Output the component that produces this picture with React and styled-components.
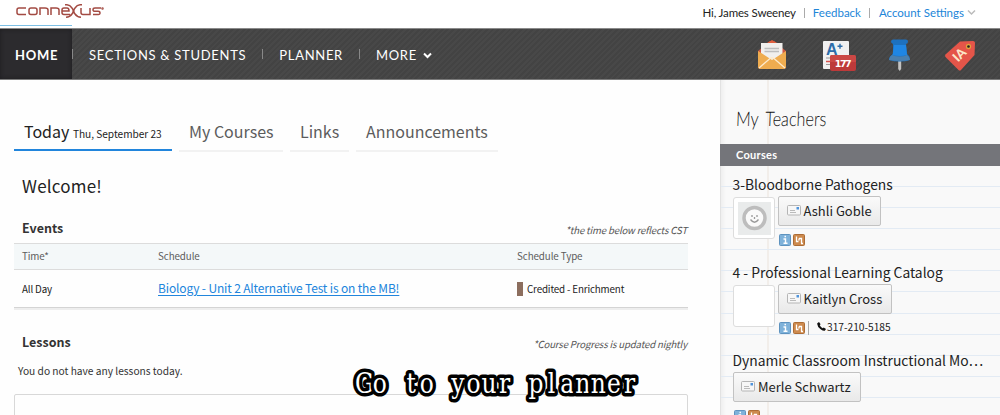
import React from "react";
import styled, { createGlobalStyle } from "styled-components";

const Global = createGlobalStyle`
  * { box-sizing: border-box; }
  html, body { margin: 0; padding: 0; overflow: hidden; }
`;

const source = `"Noto Sans CJK SC", "Open Sans", sans-serif`;
const lato = `Lato, sans-serif`;

const Page = styled.div`
  position: relative;
  width: 1000px;
  height: 415px;
  overflow: hidden;
  display: flex;
  flex-direction: column;
  background: #fefefe;
  color: #222;
  font-family: ${source};
`;

const TopBar = styled.header`
  height: 28px;
  flex: none;
  display: flex;
  justify-content: space-between;
  background: #fff;
`;

const LogoArea = styled.div`
  width: 72px;
  height: 26px;
  border-bottom: 1px solid #7dbfe4;
  padding: 4px 0 0 16px;
  svg { display: block; overflow: visible; }
`;

const UserLinks = styled.div`
  display: flex;
  align-items: center;
  height: 25px;
  padding-right: 24px;
  font: 11.5px/25px ${lato};
  color: #222;
`;

const UserItem = styled.span`
  color: ${(p) => (p.$link ? "#2185d8" : "#222")};
  letter-spacing: ${(p) => p.$spacing || "0"};
  white-space: nowrap;
`;

const Rule = styled.i`
  width: 1px;
  height: ${(p) => p.$height || "10px"};
  margin: ${(p) => p.$margin || "0 8px"};
  background: ${(p) => p.$color || "#aaa"};
`;

const Nav = styled.nav`
  height: 52px;
  flex: none;
  display: flex;
  align-items: center;
  border-top: 1px solid #8a8a8a;
  border-bottom: 1px solid #7b7b7b;
  background: repeating-linear-gradient(135deg, #434343 0 2px, #484848 2px 4px);
  color: #fff;
  font: 13px/50px ${lato};
`;

const NavItem = styled.a`
  height: 50px;
  display: flex;
  align-items: center;
  padding-top: 1px;
  letter-spacing: 0.7px;
  white-space: nowrap;
  ${(p) => p.$active && `
    width: 72px;
    padding-left: 15px;
    font-weight: 700;
    background: #2c2b2e;
    box-shadow: inset 0 0 4px #1d1c1f;
  `}
  svg { margin: 1px 0 0 6px; }
`;

const NavIcons = styled.div`
  margin-left: auto;
  display: flex;
  width: 243px;
  height: 50px;
  svg { display: block; }
`;

const Body = styled.div`
  flex: 1;
  display: flex;
  min-height: 0;
`;

const Main = styled.main`
  width: 720px;
  padding: 36px 32px 0 14px;
  background: #fefefe;
`;

const Tabs = styled.div`
  display: flex;
  gap: 7px;
  height: 36px;
`;

const Tab = styled.div`
  width: ${(p) => p.$width}px;
  height: ${(p) => (p.$active ? 35 : 36)}px;
  padding-left: 10px;
  border-bottom: 2px solid ${(p) => (p.$active ? "#2185dc" : "#f2f2f2")};
  color: ${(p) => (p.$active ? "#222" : "#5c5c5c")};
  font-size: 16px;
  line-height: 31px;
  white-space: nowrap;
  small { font-size: 10.1px; margin-left: 3.5px; }
`;

const Welcome = styled.h1`
  margin: 21px 0 0 8px;
  font-size: 17px;
  letter-spacing: 0.2px;
  line-height: 26px;
  font-weight: 400;
`;

const SectionHead = styled.div`
  display: flex;
  justify-content: space-between;
  height: ${(p) => p.$height}px;
  margin-top: ${(p) => p.$top}px;
  padding-left: 8px;
`;

const SectionTitle = styled.h2`
  margin: 0;
  font-size: 12.5px;
  line-height: 20px;
  font-weight: 700;
  color: #333;
`;

const Note = styled.em`
  font-size: 9.6px;
  letter-spacing: -0.15px;
  line-height: 24px;
  margin-right: 1px;
  color: #555;
  white-space: nowrap;
`;

const Row = styled.div`
  display: grid;
  grid-template-columns: 136px 359px 1fr;
  align-items: center;
  padding: 0 0 ${(p) => (p.$head ? 2 : 1)}px 8px;
  height: ${(p) => (p.$head ? 27 : 40)}px;
  font-size: 9.8px;
  letter-spacing: ${(p) => (p.$head ? "-0.1px" : "-0.15px")};
  color: ${(p) => (p.$head ? "#5c5c5c" : "#222")};
  ${(p) => p.$head
    ? "background:#f4f8f9; border-top:1px solid #dcdcdc; border-bottom:1px solid #dcdcdc;"
    : "border-bottom:2px solid #eee; box-shadow: inset 0 -1px #d4d4d4;"}
`;

const EventLink = styled.a`
  position: relative;
  top: -1px;
  font-size: 12px;
  letter-spacing: -0.15px;
  color: #2185dc;
  text-decoration: underline;
  text-underline-offset: 2px;
`;

const Kind = styled.span`
  display: flex;
  align-items: center;
  gap: 4px;
  &::before {
    content: "";
    width: 6px;
    height: 14px;
    background: #8c6e5e;
  }
`;

const Empty = styled.p`
  margin: 5px 0 0 4px;
  font-size: 10.2px;
  line-height: 20px;
  color: #333;
`;

const Panel = styled.div`
  height: 60px;
  margin-top: 13px;
  border: 1px solid #d8d8d8;
  border-radius: 2px;
`;

const Side = styled.aside`
  flex: 1;
  min-width: 0;
  border-left: 1px solid #e2e2e2;
  background: linear-gradient(90deg, #efefef, #f9f9f9 5px);
`;

const SideHead = styled.div`
  height: 64px;
  padding: 25px 0 0 15px;
  background: linear-gradient(#f2eeea, #f2eeea) 46px 0 / 2px 100% no-repeat;
`;

const Hand = styled.h2`
  margin: 0;
  width: max-content;
  font: 300 20px/26px ${lato};
  word-spacing: 4px;
  transform: scaleX(0.81) skewX(-3deg);
  transform-origin: 0 50%;
  color: #111;
`;

const SideBar = styled.div`
  height: 22px;
  margin-left: -1px;
  padding-left: 16px;
  background: #74757a;
  color: #fff;
  font: 700 11px/22px ${lato};
  letter-spacing: 0.3px;
`;

const Paper = styled.div`
  height: 250px;
  padding: 7px 0 0 11.5px;
  background:
    repeating-linear-gradient(transparent 0 20px, #e3ebf4 20px 21px, transparent 21px 21.1px),
    linear-gradient(#f2eeea, #f2eeea) 46px 0 / 2px 100% no-repeat;
`;

const Course = styled.section`
  height: 88px;
`;

const CourseName = styled.h3`
  margin: 0;
  font-size: 13.85px;
  line-height: 23px;
  font-weight: 400;
  white-space: nowrap;
`;

const Teacher = styled.div`
  display: flex;
  gap: 3px;
`;

const Avatar = styled.div`
  width: 42.5px;
  height: 42px;
  margin-top: 1px;
  padding: 4px;
  border: 1px solid #ddd;
  border-radius: 3px;
  background: #fff;
  svg { display: block; }
`;

const MailButton = styled.button`
  display: flex;
  align-items: center;
  gap: 3px;
  width: ${(p) => p.$width}px;
  height: 30px;
  padding: 0 0 1px 7.5px;
  border: 1px solid #c2c2c2;
  border-radius: 2px;
  background: linear-gradient(#fafafa, #e9e9e9);
  color: #222;
  font: 13px/27px ${source};
  white-space: nowrap;
`;

const Tools = styled.div`
  display: flex;
  align-items: center;
  gap: 2px;
  height: 13px;
  margin-top: 7px;
  padding-left: 1px;
  font-size: 10.2px;
  line-height: 13px;
`;

const PhoneNumber = styled.span`
  display: flex;
  align-items: center;
  gap: 1px;
  height: 13px;
  padding-bottom: 2px;
`;

const Caption = styled.svg`
  position: absolute;
  left: 345px;
  top: 360px;
`;

const Logo = () => (
  <svg width="90" height="16" viewBox="0 0 90 16" fill="none" stroke="#a34b43" strokeWidth="1.5">
    <path d="M10 4H3Q1 4 1 6V8.500Q1 10.500 3 10.500H10M13 6Q13 4 15 4H19Q21 4 21 6V8.500Q21 10.500 19 10.500H15Q13 10.500 13 8.500ZM24 11V4H29Q32 4 32 6V11M35 11V4H40Q43 4 43 6V11M54 10.500H48Q46 10.500 46 8.500V6Q46 4 48 4H51Q53 4 53 7H46M65 4V8.500Q65 10.500 67 10.500H74V4M85 4H79Q77 4 77 5.700T79 7.300H82Q84 7.300 84 9T82 10.500H77" />
    <path d="M49 .8H51Q54 1 56 4Q58.500 7 56 10Q54 13 50 13.300M66 .8H64Q61 1 59 4Q56.500 7 59 10Q61 13 65 13.300" />
    <circle cx="86.500" cy="4.500" r=".5" />
  </svg>
);

const Chevron = ({ color, w = 1.5 }) => (
  <svg width="9" height="7" viewBox="0 0 9 7" fill="none" stroke={color} strokeWidth={w}>
    <path d="M1 1.500L4.500 5L8 1.500" />
  </svg>
);

const MailGlyph = () => (
  <svg width="14" height="11" viewBox="0 0 14 11">
    <rect x=".5" y=".5" width="13" height="9.500" rx="1" fill="#f7f7f7" stroke="#b5b5b5" />
    <path d="M3 5.500h5M3 7.500h6" stroke="#bbb" />
    <rect x="9.500" y="2" width="2.500" height="2.500" fill="#4f94dc" />
  </svg>
);

const InfoGlyph = () => (
  <svg width="12" height="12" viewBox="0 0 12 12">
    <rect x=".5" y=".5" width="11" height="11" rx="1" fill="#7fb2da" stroke="#5e93bf" />
    <path d="M4.500 5h2v4M4.500 9.200h4M5.500 2.500h1.500" stroke="#fff" strokeWidth="1.400" fill="none" />
  </svg>
);

const LinkGlyph = () => (
  <svg width="12" height="12" viewBox="0 0 12 12">
    <rect x=".5" y=".5" width="11" height="11" rx="1" fill="#cd8a4e" stroke="#ad6c35" />
    <path d="M3.500 2.500v5h2M6 4.500h2.500v5M6 4.500v2M8 9.500h2" stroke="#fff" strokeWidth="1.300" fill="none" />
  </svg>
);

const Smiley = () => (
  <svg width="33" height="33" viewBox="0 0 33 33">
    <rect width="33" height="33" fill="#e9ebeb" />
    <circle cx="16.500" cy="16" r="10.500" fill="#fafafa" stroke="#bdbdbd" strokeWidth="3.500" />
    <path d="M12.500 17.500Q16.500 23 20.500 17.500" fill="none" stroke="#999" strokeWidth="1.300" />
    <path d="M14 13v2M19 13v2M16.500 15v2" stroke="#999" strokeWidth="1.300" />
  </svg>
);

const Phone = () => (
  <svg width="9" height="9" viewBox="0 0 9 9">
    <path d="M.3 1.200L2 0L3.600 2.300L2.700 3.200Q3.800 5.200 5.700 6.200L6.700 5.400L9 7L7.800 8.700Q6.500 9.300 3.600 7.200Q-.3 4 .3 1.200Z" fill="#111" />
  </svg>
);

const ToolbarIcons = () => (
  <svg width="243" height="50" viewBox="757 29 243 50">
    <path d="M758 51L772 40L786 51V66Q786 69 783 69H761Q758 69 758 66Z" fill="#cf5a41" />
    <path d="M767 43Q772 38 777 43Z" fill="#e0603f" />
    <rect x="761" y="43" width="21.500" height="20" fill="#f1efed" />
    <path d="M764.500 48.500h14.500M764.500 51.500h14.500" stroke="#bdbdbd" strokeWidth="1.300" />
    <path d="M758 51L772 60L786 51V66.500Q786 69 783.500 69H760.500Q758 69 758 66.500Z" fill="#efac4f" />
    <path d="M759 68L770 58.500Q772 57 774 58.500L785 68" fill="none" stroke="#fdeacb" strokeWidth="1.300" />
    <rect x="823" y="41" width="26" height="28" rx="1" fill="#f1f1f1" />
    <text x="826" y="54.500" fontFamily="Liberation Sans" fontWeight="700" fontSize="16" fill="#2d6da9">A</text>
    <path d="M837.500 46.300h5M840 43.800v5" stroke="#2d6da9" strokeWidth="1.400" />
    <path d="M826 58h5M826 64.500h5" stroke="#999" /><path d="M826 61.500h5" stroke="#d9534f" strokeWidth="1.500" />
    <rect x="830" y="55" width="26" height="16" rx="2" fill="#bd3a3a" />
    <path d="M830 62V57Q830 55 832 55H854Q856 55 856 57V62Z" fill="#cb4845" />
    <text x="843.200" y="67" textAnchor="middle" fontFamily="DejaVu Sans" fontWeight="700" fontSize="9.500" textLength="17" fill="#fff">177</text>
    <path d="M898.200 60h3v9l-1.500 2l-1.500-2z" fill="#c2c2c2" />
    <path d="M893 39.500H906Q908 39.500 908 41.500T906 44L907 54Q910 56 910 60Q900 63 889 60Q889 56 893 54V44Q891 43 891 41.500T893 39.500Z" fill="#1d71bf" />
    <path d="M894 45H906L907 55Q900 57 892.500 55Z" fill="#1f86e4" />
    <path d="M889 60Q889 57 892 55Q900 58 907 55Q910 57 910 60Q900 62 889 60Z" fill="#4a7fae" />
    <path d="M960 41.500L973 41Q975 41 975 43L974.500 55L961 70Q960 71 958.500 70L945.500 57Q944.500 56 945.500 54.500Z" fill="#e45549" />
    <circle cx="968.500" cy="46.500" r="2" fill="#222" stroke="#e0a03c" strokeWidth="1.300" />
    <text transform="translate(958 62.500) rotate(-45)" fontFamily="Lato" fontWeight="900" fontSize="13" fill="#fce8c9">IA</text>
  </svg>
);

const pitch = 15.6;
const squeeze = 0.96;
const captionSize = 27;
const glyphWidth = { G: 0.719, o: 0.542, t: 0.362, y: 0.508, u: 0.58, r: 0.43, p: 0.576, l: 0.288, a: 0.537, n: 0.58, e: 0.533 };
const words = [["Go", 0], ["to", 3], ["your", 6], ["planner", 11]];

// Centres each letter in a fixed-width cell, like a typewriter face.
const cells = (word, start) =>
  [...word].map((c, i) => ((11.5 + (start + i + 0.5) * pitch) / squeeze - (glyphWidth[c] * captionSize) / 2).toFixed(2)).join(" ");

export default function App() {
  return (
    <Page>
      <Global />
      <TopBar>
        <LogoArea><Logo /></LogoArea>
        <UserLinks>
          <UserItem $spacing="-0.15px">Hi, James Sweeney</UserItem>
          <Rule $margin="0 8px" />
          <UserItem $link>Feedback</UserItem>
          <Rule $margin="0 9px 0 8px" />
          <UserItem $link>Account Settings</UserItem>
          <Rule $margin="0 1px" $color="transparent" />
          <Chevron color="#bbb" />
        </UserLinks>
      </TopBar>
      <Nav>
        <NavItem $active>HOME</NavItem>
        <Rule $margin="0 16px 0 0" $color="#888" />
        <NavItem>SECTIONS &amp; STUDENTS</NavItem>
        <Rule $margin="0 16px" $color="#888" />
        <NavItem>PLANNER</NavItem>
        <Rule $margin="0 16px" $color="#888" />
        <NavItem>MORE <Chevron color="#fff" w={2} /></NavItem>
        <NavIcons><ToolbarIcons /></NavIcons>
      </Nav>
      <Body>
        <Main>
          <Tabs>
            <Tab $active $width={158}>Today<small>Thu, September 23</small></Tab>
            <Tab $width={104}>My Courses</Tab>
            <Tab $width={59}>Links</Tab>
            <Tab $width={142}>Announcements</Tab>
          </Tabs>
          <Welcome>Welcome!</Welcome>
          <SectionHead $top={19} $height={25}>
            <SectionTitle>Events</SectionTitle>
            <Note>*the time below reflects CST</Note>
          </SectionHead>
          <Row $head><span>Time*</span><span>Schedule</span><span>Schedule Type</span></Row>
          <Row>
            <span>All Day</span>
            <span><EventLink>Biology - Unit 2 Alternative Test is on the MB!</EventLink></span>
            <Kind>Credited - Enrichment</Kind>
          </Row>
          <SectionHead $top={22} $height={24}>
            <SectionTitle>Lessons</SectionTitle>
            <Note>*Course Progress is updated nightly</Note>
          </SectionHead>
          <Empty>You do not have any lessons today.</Empty>
          <Panel />
        </Main>
        <Side>
          <SideHead><Hand>My Teachers</Hand></SideHead>
          <SideBar>Courses</SideBar>
          <Paper>
            <Course>
              <CourseName>3-Bloodborne Pathogens</CourseName>
              <Teacher>
                <Avatar><Smiley /></Avatar>
                <div>
                  <MailButton $width={103}><MailGlyph />Ashli Goble</MailButton>
                  <Tools><InfoGlyph /><LinkGlyph /></Tools>
                </div>
              </Teacher>
            </Course>
            <Course>
              <CourseName>4 - Professional Learning Catalog</CourseName>
              <Teacher>
                <Avatar />
                <div>
                  <MailButton $width={114}><MailGlyph />Kaitlyn Cross</MailButton>
                  <Tools>
                    <InfoGlyph /><LinkGlyph />
                    <Rule $height="14px" $margin="0 6px 0 1px" />
                    <PhoneNumber><Phone />317-210-5185</PhoneNumber>
                  </Tools>
                </div>
              </Teacher>
            </Course>
            <Course>
              <CourseName>Dynamic Classroom Instructional Mo…</CourseName>
              <MailButton $width={128}><MailGlyph />Merle Schwartz</MailButton>
              <Tools><InfoGlyph /><LinkGlyph /></Tools>
            </Course>
          </Paper>
        </Side>
      </Body>
      <Caption width="300" height="50" viewBox="0 0 300 50">
        <g transform={`scale(${squeeze} 1)`}>
          {words.map(([word, start]) => (
            <text key={word} x={cells(word, start)} y="33.5" fontFamily="DejaVu Serif Condensed, DejaVu Serif"
              fontStretch="condensed" fontSize={captionSize} fill="#fff" stroke="#000" strokeWidth="7"
              strokeLinejoin="round" paintOrder="stroke">{word}</text>
          ))}
        </g>
      </Caption>
    </Page>
  );
}
